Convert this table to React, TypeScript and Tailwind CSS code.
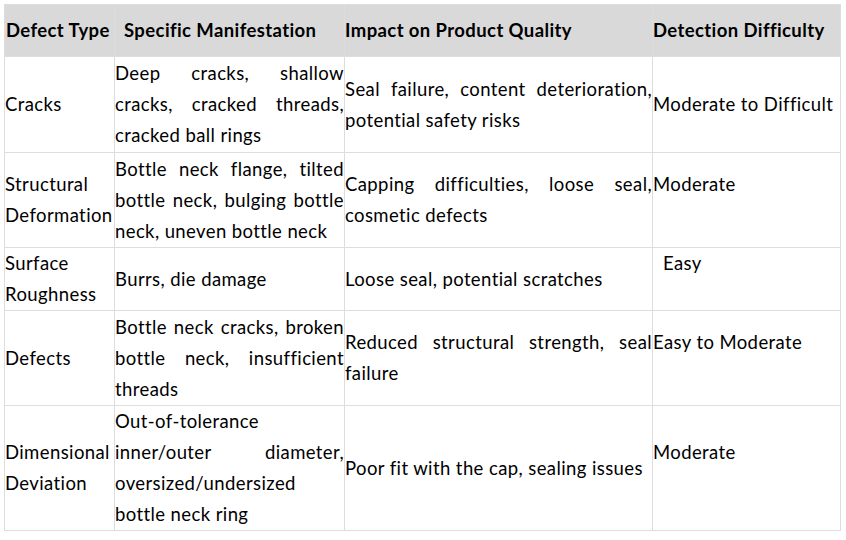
import React from "react";

type Cell = { lines: string[]; justify?: boolean; extraClass?: string };
type Row = { h: number; cells: Cell[] };

const rows: Row[] = [
  {
    h: 96,
    cells: [
      { lines: ["Cracks"] },
      { lines: ["Deep cracks, shallow", "cracks, cracked threads,", "cracked ball rings"], justify: true },
      { lines: ["Seal failure, content deterioration,", "potential safety risks"], justify: true },
      { lines: ["Moderate to Difficult"] },
    ],
  },
  {
    h: 95,
    cells: [
      { lines: ["Structural", "Deformation"] },
      { lines: ["Bottle neck flange, tilted", "bottle neck, bulging bottle", "neck, uneven bottle neck"], justify: true },
      { lines: ["Capping difficulties, loose seal,", "cosmetic defects"], justify: true },
      { lines: ["Moderate", "\u00a0"] },
    ],
  },
  {
    h: 62,
    cells: [
      { lines: ["Surface", "Roughness"] },
      { lines: ["Burrs, die damage"], justify: true },
      { lines: ["Loose seal, potential scratches"], justify: true },
      { lines: ["Easy", "\u00a0"], extraClass: "pl-[10px]" },
    ],
  },
  {
    h: 95,
    cells: [
      { lines: ["Defects"] },
      { lines: ["Bottle neck cracks, broken", "bottle neck, insufficient", "threads"], justify: true },
      { lines: ["Reduced structural strength, seal", "failure"], justify: true },
      { lines: ["Easy to Moderate", "\u00a0"] },
    ],
  },
  {
    h: 125,
    cells: [
      { lines: ["Dimensional", "Deviation"] },
      {
        lines: ["Out-of-tolerance", "inner/outer diameter,", "oversized/undersized", "bottle neck ring"],
        justify: true,
      },
      { lines: ["Poor fit with the cap, sealing issues"], justify: true },
      { lines: ["Moderate", "\u00a0"] },
    ],
  },
];

const headers: { t: string; c: string }[] = [
  { t: "Defect Type", c: "pl-[1px]" },
  { t: "Specific Manifestation", c: "pl-[9px]" },
  { t: "Impact on Product Quality", c: "pl-0" },
  { t: "Detection Difficulty", c: "pl-0" },
];

export default function App() {
  return (
    <div className="w-[846px] h-[540px] bg-white pt-[4px] pl-[4px] text-black font-['Lato',sans-serif] text-[18.5px] tracking-[0.4px]">
      <table className="table-fixed border-collapse w-[836px]">
        <colgroup>
          <col className="w-[110px]" />
          <col className="w-[230px]" />
          <col className="w-[308px]" />
          <col className="w-[188px]" />
        </colgroup>
        <thead>
          <tr className="h-[52px] bg-[#d9d9d9]">
            {headers.map((h) => (
              <th
                key={h.t}
                className={`border border-[#dddddd] text-left align-middle font-bold whitespace-nowrap leading-[31px] pr-0 ${h.c}`}
              >
                {h.t}
              </th>
            ))}
          </tr>
        </thead>
        <tbody>
          {rows.map((r, i) => (
            <tr key={i} style={{ height: r.h }}>
              {r.cells.map((c, j) => (
                <td
                  key={j}
                  className={`border border-[#dddddd] align-middle p-0 leading-[31px] ${c.extraClass ?? ""}`}
                >
                  {c.lines.map((l, k) => (
                    <div
                      key={k}
                      className={`whitespace-nowrap ${
                        c.justify && k < c.lines.length - 1 ? "text-justify [text-align-last:justify]" : "text-left"
                      }`}
                    >
                      {l}
                    </div>
                  ))}
                </td>
              ))}
            </tr>
          ))}
        </tbody>
      </table>
    </div>
  );
}
